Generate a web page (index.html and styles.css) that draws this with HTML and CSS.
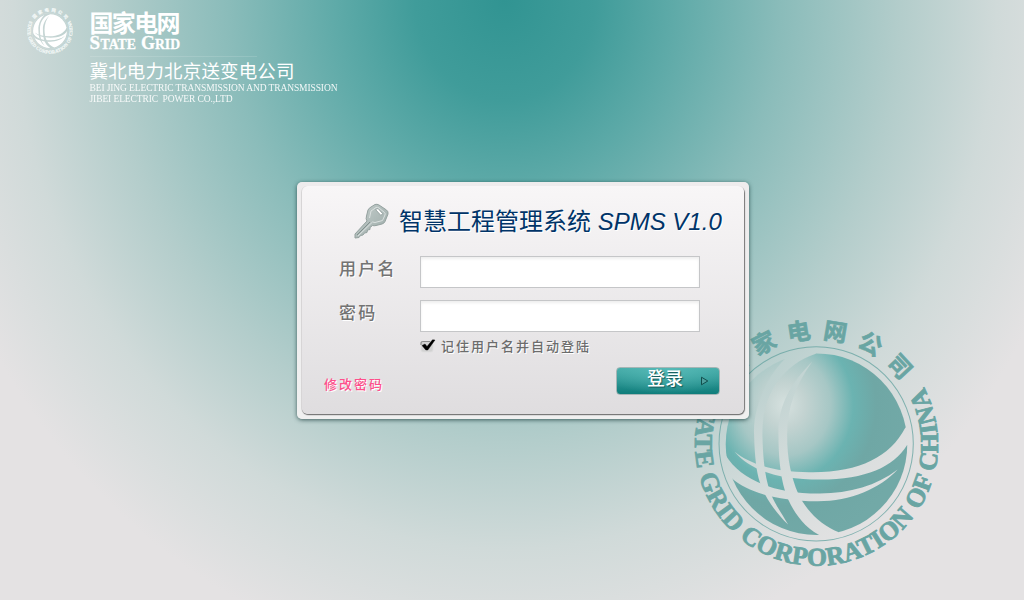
FILE: index.html
```html
<!DOCTYPE html>
<html lang="zh-CN">
<head>
<meta charset="utf-8">
<title>智慧工程管理系统</title>
<link rel="stylesheet" href="styles.css">
</head>
<body>
<svg class="defs" aria-hidden="true">
  <defs>
    <radialGradient id="shine" gradientUnits="userSpaceOnUse" cx="315" cy="285" r="380" gradientTransform="translate(315 285) scale(1 1.1) translate(-315 -285)">
      <stop offset="0" stop-color="#d6e1df"/>
      <stop offset=".16" stop-color="#c3d3d1"/>
      <stop offset=".36" stop-color="#a6c7c5"/>
      <stop offset=".54" stop-color="#6bb3b1"/>
      <stop offset=".72" stop-color="#6fa7a5"/>
      <stop offset="1" stop-color="#72a9a7"/>
    </radialGradient>
    <mask id="bands" maskUnits="userSpaceOnUse" x="100" y="100" width="620" height="620">
      <rect x="100" y="100" width="620" height="620" fill="#fff"/>
      <path d="M315 147C265 195 218 290 223 375C225 440 230 485 240 515C252 555 285 605 325 643C300 600 285 580 275 555C258 510 250 460 248 375C248 300 265 255 293 215C320 178 360 146 408 131L400 100L330 100Z"/>
      <path d="M397 155C335 215 292 290 296 375C296 440 302 495 315 540C330 590 370 655 430 680L475 690L475 665C430 648 380 605 355 550C335 500 322 450 322 375C322 290 350 220 397 155Z"/>
      <path d="M165 425C215 466 300 488 400 486C540 486 630 440 676 353L700 350L700 400L681 405C640 470 560 507 420 508C300 508 215 484 165 425Z"/>
      <path d="M130 432L138 435C180 505 280 551 420 550C510 549 590 527 653 478C600 535 510 574 410 573C300 572 205 548 157 505L130 500Z"/>
    </mask>
    <symbol id="emblem" viewBox="40 30 740 740">
      <circle class="emblem-globe" cx="410" cy="402" r="272" mask="url(#bands)"/>
      <circle class="emblem-ring" cx="409" cy="401" r="291"/>
      <g class="emblem-cn">
        <text transform="rotate(-46 410 402)" x="410" y="86">国</text>
        <text transform="rotate(-27.5 410 402)" x="410" y="86">家</text>
        <text transform="rotate(-9 410 402)" x="410" y="86">电</text>
        <text transform="rotate(9.6 410 402)" x="410" y="86">网</text>
        <text transform="rotate(28.3 410 402)" x="410" y="86">公</text>
        <text transform="rotate(47 410 402)" x="410" y="86">司</text>
      </g>
      <path id="arc" fill="none" d="M85.500 236.700A364 364 0 1 0 731.400 231.100"/>
      <text class="emblem-en"><textPath href="#arc" textLength="1492" lengthAdjust="spacing">STATE GRID CORPORATION OF CHINA</textPath></text>
    </symbol>
    <linearGradient id="metal" x1="0" y1="0" x2="1" y2="1">
      <stop offset="0" stop-color="#c6cfcd"/>
      <stop offset="1" stop-color="#9aa9a7"/>
    </linearGradient>
  </defs>
</svg>

<svg class="watermark"><use href="#emblem"/></svg>

<header class="brand">
  <svg class="brand-emblem"><use href="#emblem"/></svg>
  <svg class="brand-name" viewBox="0 0 260 110">
    <text class="brand-cn" x="-.5" y="32" textLength="91">国家电网</text>
    <text class="brand-en cap" x="-.5" y="49">S</text>
    <text class="brand-en" x="10.500" y="49" textLength="35.500" lengthAdjust="spacingAndGlyphs">TATE</text>
    <text class="brand-en cap" x="51" y="49" textLength="14" lengthAdjust="spacingAndGlyphs">G</text>
    <text class="brand-en" x="65" y="49" textLength="25" lengthAdjust="spacingAndGlyphs">RID</text>
    <rect class="brand-rule" x="0" y="56" width="167" height="1"/>
    <text class="brand-company" x="-.5" y="77.500" textLength="205">冀北电力北京送变电公司</text>
    <text class="brand-sub" x="-.5" y="90.500" textLength="248">BEI JING ELECTRIC TRANSMISSION AND TRANSMISSION</text>
    <text class="brand-sub" x="-.5" y="101.500" textLength="143" xml:space="preserve">JIBEI ELECTRIC  POWER CO.,LTD</text>
  </svg>
</header>

<main class="stage">
  <form class="card">
    <div class="panel">
      <h1 class="title">
        <svg class="key" viewBox="0 0 36 36">
          <path class="key-body" d="M1 35L1 31L13 18Q11.500 16 12.500 13L14 7Q15 5 17 4L21 1.500Q23 .8 25 2L32.500 7Q34.500 8.500 34 11L31 18.500Q30 20.500 28 21L22 22.500Q20 23 18.500 22.500L16 24.500L16 26.500L13.500 27L13 29.500L10.500 30L9 32L6.500 32.500L5 34.500Z"/>
          <path class="key-edge" d="M15.500 15L17 8L22 4.500Q23.500 4 25 5L30.500 9.500Q31.500 10.500 31 12L28.500 17.500L21 19.500L18.500 19L4 33"/>
          <path class="key-groove" d="M16 19L3 32"/>
          <path class="key-hole" d="M21.500 6.500L24 5.500L28.500 10.500L27 12.500Z"/>
        </svg>
        <span>智慧工程管理系统 <em>SPMS V1.0</em></span>
      </h1>
      <div class="row">
        <label class="label" for="user">用户名</label>
        <input class="field" id="user" type="text">
      </div>
      <div class="row">
        <label class="label" for="pass">密码</label>
        <input class="field" id="pass" type="password">
      </div>
      <label class="remember">
        <svg class="check" viewBox="0 0 16 14">
          <rect class="check-box" x="1" y="2.500" width="12" height="10.500" rx="2"/>
          <path class="check-shade" d="M1 6V4.500Q1 2.500 3 2.500H10"/>
          <path class="check-mark" d="M2 6.500L5 5L7 7.500L12.500 .8L15 1L7.800 11L5.800 11Z"/>
        </svg>
        <span>记住用户名并自动登陆</span>
      </label>
      <div class="actions">
        <a class="change">修改密码</a>
        <button class="login" type="button">
          <span>登录</span>
          <svg class="arrow" viewBox="0 0 9 10"><path d="M1.500 1.200L7.800 5L1.500 8.800Z"/></svg>
        </button>
      </div>
    </div>
  </form>
</main>
</body>
</html>
```
FILE: styles.css
```css
* { box-sizing: border-box; }
body {
  position: relative;
  width: 1024px;
  height: 600px;
  margin: 0;
  overflow: hidden;
  font-family: "Liberation Sans", "Noto Sans CJK SC", sans-serif;
  background: #e4e2e3 radial-gradient(ellipse 600px 670px at 505px 0, #319492 0, #409c9a 15%, #5eaaa8 28%, #8abcba 46%, #b3cdcb 66%, #d0dad9 82%, #e4e2e3 100%);
}
.defs { position: absolute; width: 0; height: 0; }

.emblem-globe { fill: var(--globe); }
.emblem-ring { fill: none; stroke: currentColor; stroke-width: 3; opacity: .8; }
.emblem-cn { fill: currentColor; stroke: currentColor; stroke-width: 2; font: bold 70px "Noto Sans CJK SC", sans-serif; text-anchor: middle; }
.emblem-en { fill: currentColor; stroke: currentColor; stroke-width: 2.5; font: bold 77px "Liberation Serif", serif; }

.watermark {
  position: absolute;
  left: 693px;
  top: 320px;
  width: 247px;
  height: 247px;
  color: #69a5a3;
  --globe: url(#shine);
}

.brand { display: flex; gap: 17px; height: 110px; padding-left: 27px; }
.brand-emblem { width: 46px; height: 46px; margin-top: 8px; color: #f5faf9; --globe: #fff; }
.brand-emblem .emblem-en { stroke-width: 8; }
.brand-name { width: 260px; height: 110px; overflow: visible; fill: #fff; }
.brand-cn { font: bold 24px "Noto Sans CJK SC", sans-serif; }
.brand-en { font: bold 15px "Liberation Serif", serif; stroke: #fff; stroke-width: .3px; }
.brand-en.cap { font-size: 19px; }
.brand-rule { opacity: .13; }
.brand-company { font: 18.5px "Noto Sans CJK SC", sans-serif; }
.brand-sub { font: 9.5px "Liberation Serif", serif; opacity: .9; }

.stage { position: relative; display: flex; padding: 72px 0 0 297px; }
.card {
  width: 452px;
  height: 237px;
  padding: 4px 4px 4px 5px;
  border-radius: 5px;
  background: linear-gradient(#eeeced, #f0f0f0);
  box-shadow: 0 1px 4px rgba(20, 55, 55, .75);
}
.panel {
  display: flex;
  flex-direction: column;
  width: 442px;
  height: 228px;
  padding: 16px 24px 0 22px;
  border-radius: 6px;
  background: linear-gradient(#f8f6f7, #dfdddf);
  box-shadow: 1px 1px 1px #777, 0 1px 1px #888, -1px 0 0 #e0dedf;
}
.title {
  display: flex;
  align-items: center;
  gap: 9px;
  height: 38px;
  margin: 0 -10px 16px 30px;
  font-size: 24px;
  font-weight: 400;
  line-height: 38px;
  white-space: nowrap;
  color: #003468;
  text-shadow: 1px 1px 0 #fff;
}
.title span { padding-top: 2px; }
.key { flex: none; width: 36px; height: 36px; }
.key-body { fill: url(#metal); stroke: #94a19f; stroke-width: 1; }
.key-edge { fill: none; stroke: #dbe1e0; stroke-width: 1; }
.key-groove { fill: none; stroke: #82908e; stroke-width: 1; }
.key-hole { fill: #fff; stroke: #8f9c9a; stroke-width: .8; }

.row { display: flex; height: 32px; margin: 0 0 12px 15px; }
.label {
  width: 81px;
  font-size: 17px;
  font-weight: 500;
  line-height: 27px;
  letter-spacing: 2.2px;
  color: #737373;
  text-shadow: 1px 1px 0 #fff;
}
.field {
  width: 280px;
  height: 32px;
  padding: 0 6px;
  border: 1px solid #c5c6c8;
  outline: 0;
  background: #fff;
  box-shadow: inset 0 2px 3px #eee;
}
.remember {
  display: flex;
  align-items: center;
  gap: 5px;
  height: 20px;
  margin: -8px 0 0 96px;
  font-size: 13px;
  font-weight: 500;
  letter-spacing: 2px;
  color: #6c6c6c;
  text-shadow: 1px 1px 0 #fff;
}
.remember span { margin-top: -2px; }
.check { width: 16px; height: 14px; }
.check-box { fill: #d2d2d2; stroke: #dedede; stroke-width: .8; }
.check-shade { fill: none; stroke: #8c8c8c; stroke-width: 1.2; }
.check-mark { fill: #000; stroke: #000; stroke-width: .4; }
.actions { display: flex; justify-content: space-between; height: 28px; margin-top: 11px; }
.change {
  font-size: 13px;
  font-weight: 500;
  line-height: 36px;
  letter-spacing: 2px;
  color: #ff4f8b;
  text-shadow: 1px 1px 0 #fff;
}
.login {
  display: flex;
  align-items: center;
  gap: 17px;
  width: 104px;
  height: 28px;
  padding: 0 0 0 30px;
  border: 1px solid #a5b5b5;
  border-radius: 4px;
  font: 500 18px/24px "Liberation Sans", "Noto Sans CJK SC", sans-serif;
  color: #fff;
  text-shadow: 1px 1px 1px #155;
  background: radial-gradient(ellipse 75px 26px at 50% 0, #55b9b6 0, rgba(85, 185, 182, 0) 100%), linear-gradient(#45aaa7, #0f7d7b);
}
.login span { margin-top: -4px; }
.arrow { width: 9px; height: 10px; fill: #4fa09e; stroke: #114e4d; stroke-width: 1; }
```
